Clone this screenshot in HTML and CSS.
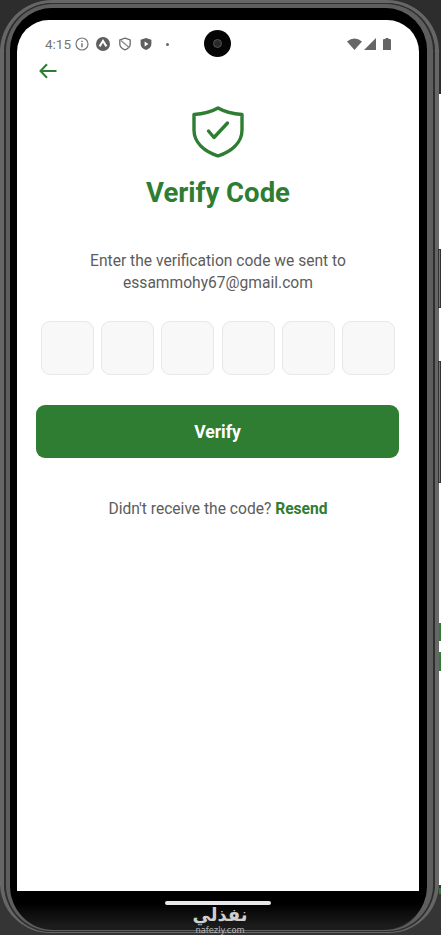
FILE: index.html
```html
<!DOCTYPE html>
<html lang="en">
<head>
  <meta charset="UTF-8">
  <meta name="viewport" content="width=device-width, initial-scale=1.0">
  <title>Verify Code</title>
  <link rel="stylesheet" href="styles.css">
</head>
<body>
  <div class="phone">
    <div class="frame">
      <div class="rim">
        <div class="bezel">
          <div class="screen">
            <div class="status-bar">
              <span class="time">4:15</span>
              <svg class="status-icon info-icon" viewBox="0 0 14 14" width="14" height="14">
                <circle cx="7" cy="7" r="6" fill="none" stroke="#777" stroke-width="1.2"/>
                <path d="M7 6.200v4M7 3.800v1.200" stroke="#777" stroke-width="1.500" fill="none"/>
              </svg>
              <svg class="status-icon" viewBox="0 0 14 14" width="14" height="14">
                <circle cx="7" cy="7" r="7" fill="#5f5f5f"/>
                <path d="M3.600 9.400 7 4l3.400 5.400" stroke="#fff" stroke-width="2" fill="none"/>
              </svg>
              <svg class="status-icon shield-icon" viewBox="0 0 14 14" width="14" height="14">
                <path d="M7 1.200 12.200 3v4c0 2.800-2.200 4.800-5.200 5.800C4 11.800 1.800 9.800 1.800 7V3z" fill="none" stroke="#6a6a6a" stroke-width="1.300"/>
                <path d="M3 3.500 11 10.500" stroke="#8a8a8a" stroke-width="1.300"/>
              </svg>
              <svg class="status-icon" viewBox="0 0 14 14" width="14" height="14">
                <path d="M7 1 12.400 2.800v4.200c0 2.900-2.300 5-5.400 6-3.100-1-5.400-3.100-5.400-6V2.800z" fill="#5f5f5f"/>
                <path d="M5.600 4.600v4.800L9.400 7z" fill="#fff"/>
              </svg>
              <span class="status-dot"></span>
              <span class="camera"><span class="lens"></span></span>
              <span class="status-right">
                <svg viewBox="0 0 15 12" width="15" height="12"><path d="M0 3.500Q7.500-2.500 15 3.500L7.500 12z" fill="#666"/></svg>
                <svg viewBox="0 0 12 12" width="12" height="12"><path d="M12 0v12H0z" fill="#666"/></svg>
                <svg class="battery" viewBox="0 0 8 12" width="8" height="12"><path d="M2.500 0h3v1H7a1 1 0 0 1 1 1v10H0V2a1 1 0 0 1 1-1h1.500z" fill="#666"/></svg>
              </span>
            </div>

            <svg class="back" viewBox="0 0 18 16" width="18" height="16">
              <path d="M17.500 8H1.500M8 1.300 1.500 8 8 14.700" fill="none" stroke="#2e7d32" stroke-width="2"/>
            </svg>

            <div class="content">
              <svg class="shield" viewBox="0 0 52 52" width="52" height="52">
                <path d="M26 2C33 6 41 8 50 8.500V24C50 37 39 45.500 26 50 13 45.500 2 37 2 24V8.500C11 8 19 6 26 2Z" fill="none" stroke="#2e7d32" stroke-width="3.400" stroke-linejoin="round"/>
                <path d="M16.500 25 22 31.500 35.500 17" fill="none" stroke="#2e7d32" stroke-width="3.400" stroke-linecap="round" stroke-linejoin="round"/>
              </svg>
              <h1>Verify Code</h1>
              <p class="intro">Enter the verification code we sent to<br>essammohy67@gmail.com</p>

              <div class="code-row">
                <div class="code-box"></div>
                <div class="code-box"></div>
                <div class="code-box"></div>
                <div class="code-box"></div>
                <div class="code-box"></div>
                <div class="code-box"></div>
              </div>

              <button class="verify-btn">Verify</button>

              <p class="resend">Didn't receive the code? <a href="#">Resend</a></p>
            </div>
          </div>

          <div class="nav-area">
            <span class="home-bar"></span>
          </div>
        </div>
      </div>
    </div>
  </div>

  <div class="watermark">
    <span class="mark">نفذلي</span>
    <span class="mark-url">nafezly.com</span>
  </div>

  <span class="side-top"></span>
  <span class="side-key key-one"></span>
  <span class="side-key key-two"></span>
  <span class="side-green green-one"></span>
  <span class="side-green green-two"></span>
  <span class="side-green green-three"></span>
</body>
</html>
```

FILE: styles.css
```css
html,
body {
  margin: 0;
  padding: 0;
}

body {
  width: 441px;
  height: 935px;
  overflow: hidden;
  position: relative;
  background: linear-gradient(#2d2d2d 0, #2d2d2d 50px, #fff 50px, #fff 885px, #353535 885px);
  font-family: Roboto, sans-serif;
}

/* device frame, three stripes of grey round the black bezel */
.phone {
  width: 439px;
  height: 933px;
  box-sizing: border-box;
  border-style: solid;
  border-color: #666;
  border-width: 3px 4px 1px 4px;
  border-radius: 52px 52px 50px 50px;
}

.frame {
  height: 100%;
  box-sizing: border-box;
  border-style: solid;
  border-color: #2f2f2f;
  border-width: 1px 2px 1px 2px;
  border-radius: 49px 49px 48px 48px;
}

.rim {
  height: 100%;
  box-sizing: border-box;
  border-style: solid;
  border-color: #5e5e5e;
  border-width: 4px 6px 1px 4px;
  border-radius: 47px 47px 46px 46px;
}

.bezel {
  height: 100%;
  box-sizing: border-box;
  padding: 12px 8px 0 7px;
  background: linear-gradient(#000 0, #000 895px, #1c1c1c 918px);
  border-radius: 42px 42px 44px 44px;
  display: flex;
  flex-direction: column;
}

.screen {
  height: 871px;
  flex: none;
  background-color: #fff;
  border-radius: 32px 32px 0 0;
  display: flex;
  flex-direction: column;
}

.status-bar {
  height: 24px;
  margin-top: 12px;
  padding: 0 28px 0 28px;
  display: flex;
  align-items: center;
  gap: 7px;
  position: relative;
}

.time {
  font-size: 13.5px;
  color: #757575;
}

.status-icon {
  flex: none;
}

.info-icon {
  margin-left: -3px;
}

.shield-icon {
  margin-left: 1px;
}

.status-dot {
  width: 3px;
  height: 3px;
  margin-left: 6px;
  border-radius: 50%;
  background-color: #666;
}

.camera {
  position: absolute;
  left: 187px;
  top: -2px;
  width: 27px;
  height: 27px;
  border-radius: 50%;
  background-color: #050505;
  display: flex;
  align-items: center;
  justify-content: center;
}

.lens {
  width: 9px;
  height: 9px;
  border-radius: 50%;
  background-color: #2a2a2a;
  border: 1px solid #555;
  box-sizing: border-box;
}

.status-right {
  margin-left: auto;
  display: flex;
  align-items: center;
  gap: 2px;
}

.battery {
  margin-left: 5px;
}

.back {
  display: block;
  margin: 7px 0 0 22px;
}

.content {
  padding: 0 15px;
  display: flex;
  flex-direction: column;
  align-items: center;
}

.shield {
  display: block;
  margin-top: 27px;
}

h1 {
  margin: 17px 0 0;
  font-size: 27.5px;
  line-height: 36px;
  font-weight: 700;
  color: #2e7d32;
}

.intro {
  margin: 39px 0 0;
  font-size: 15.6px;
  line-height: 22px;
  text-align: center;
  color: #5c5c5c;
}

.code-row {
  margin-top: 27px;
  width: 354px;
  display: flex;
  justify-content: space-between;
}

.code-box {
  width: 53px;
  height: 54px;
  box-sizing: border-box;
  background-color: #f8f8f8;
  border: 1px solid #e8e8e8;
  border-radius: 9px;
}

.verify-btn {
  margin: 30px 1px 0 0;
  width: 363px;
  height: 53px;
  border: none;
  border-radius: 9px;
  background-color: #2e7d32;
  color: #fff;
  font-family: Roboto, sans-serif;
  font-size: 17.5px;
  font-weight: 700;
}

.resend {
  margin: 41px 0 0;
  font-size: 15.6px;
  line-height: 20px;
  color: #5c5c5c;
}

.resend a {
  color: #2e7d32;
  font-weight: 700;
  text-decoration: none;
}

.nav-area {
  flex: 1;
  display: flex;
  flex-direction: column;
  align-items: center;
}

.home-bar {
  width: 106px;
  height: 4px;
  margin-top: 10px;
  border-radius: 2px;
  background-color: #e8e8e8;
}

/* site watermark stamped over the bottom of the phone */
.watermark {
  position: absolute;
  left: 173px;
  bottom: 0;
  width: 94px;
  display: flex;
  flex-direction: column;
  align-items: center;
}

.mark {
  font-family: "DejaVu Sans", sans-serif;
  font-size: 18px;
  line-height: 21px;
  font-weight: 700;
  color: #cfcfcf;
}

.mark-url {
  font-family: "DejaVu Sans", sans-serif;
  font-size: 8.3px;
  line-height: 10px;
  color: #b8b8b8;
}

/* bits of the page behind the phone */
.side-top {
  position: absolute;
  left: 439px;
  top: 50px;
  width: 2px;
  height: 44px;
  background-color: #2d2d2d;
}

.side-key {
  position: absolute;
  left: 438px;
  width: 3px;
  background-color: #777;
  border: 1px solid #333;
  box-sizing: border-box;
}

.key-one {
  top: 249px;
  height: 59px;
}

.key-two {
  top: 361px;
  height: 122px;
}

.side-green {
  position: absolute;
  left: 439px;
  width: 2px;
  background-color: #2e7d32;
}

.green-one {
  top: 623px;
  height: 18px;
}

.green-two {
  top: 652px;
  height: 19px;
}

.green-three {
  top: 888px;
  height: 6px;
}
```
